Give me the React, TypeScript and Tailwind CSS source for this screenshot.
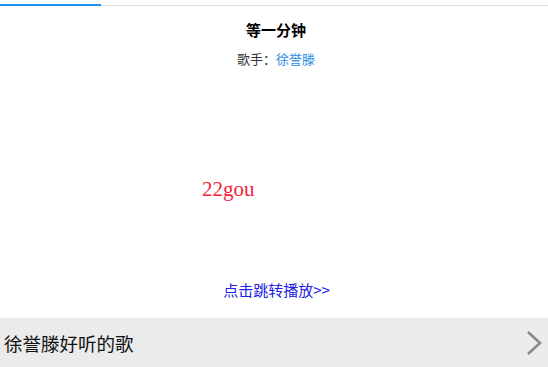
const CJK = '"Noto Sans CJK SC", "Noto Sans", sans-serif';

function Chevron() {
  return (
    <svg width="18" height="26" viewBox="0 0 18 26" fill="none" className="shrink-0">
      <path d="M3 2 L15 13 L3 24" stroke="#8a8a8a" strokeWidth="2.6" strokeLinecap="butt" strokeLinejoin="miter" />
    </svg>
  );
}

export default function App() {
  return (
    <div className="flex h-[367px] w-[548px] flex-col overflow-hidden bg-white" style={{ fontFamily: CJK }}>
      {/* load progress */}
      <div className="relative mt-[4px] h-[2px] w-full">
        <div className="absolute bottom-0 left-0 h-px w-full bg-[#dcdcdc]" />
        <div className="absolute left-0 top-0 h-[2px] w-[101px] bg-[#1e90f0]" />
      </div>

      <div className="pl-[4px]">
        <h1 className="mt-[15px] text-center text-[15px] font-bold leading-[18px] text-black">等一分钟</h1>
        <p className="mt-[12px] text-center text-[13px] leading-[16px] text-[#333]">
          歌手：<span className="text-[#2b8ee6]">徐誉滕</span>
        </p>
      </div>

      <div className="flex-1">
        <div
          className="ml-[202px] mt-[110px] text-[21px] leading-[24px] text-[#f5223c]"
          style={{ fontFamily: '"Liberation Serif", "DejaVu Serif", serif' }}
        >
          22gou
        </div>
        <div className="mt-[76px] text-center">
          <a className="ml-[5px] text-[15px] leading-[18px] text-[#2020e8]">点击跳转播放&gt;&gt;</a>
        </div>
      </div>

      <div className="flex h-[49px] items-center justify-between bg-[#ebebeb] pl-[4px] pr-[5px]">
        <span className="text-[18.5px] leading-[22px] text-[#111]">徐誉滕好听的歌</span>
        <Chevron />
      </div>
    </div>
  );
}
